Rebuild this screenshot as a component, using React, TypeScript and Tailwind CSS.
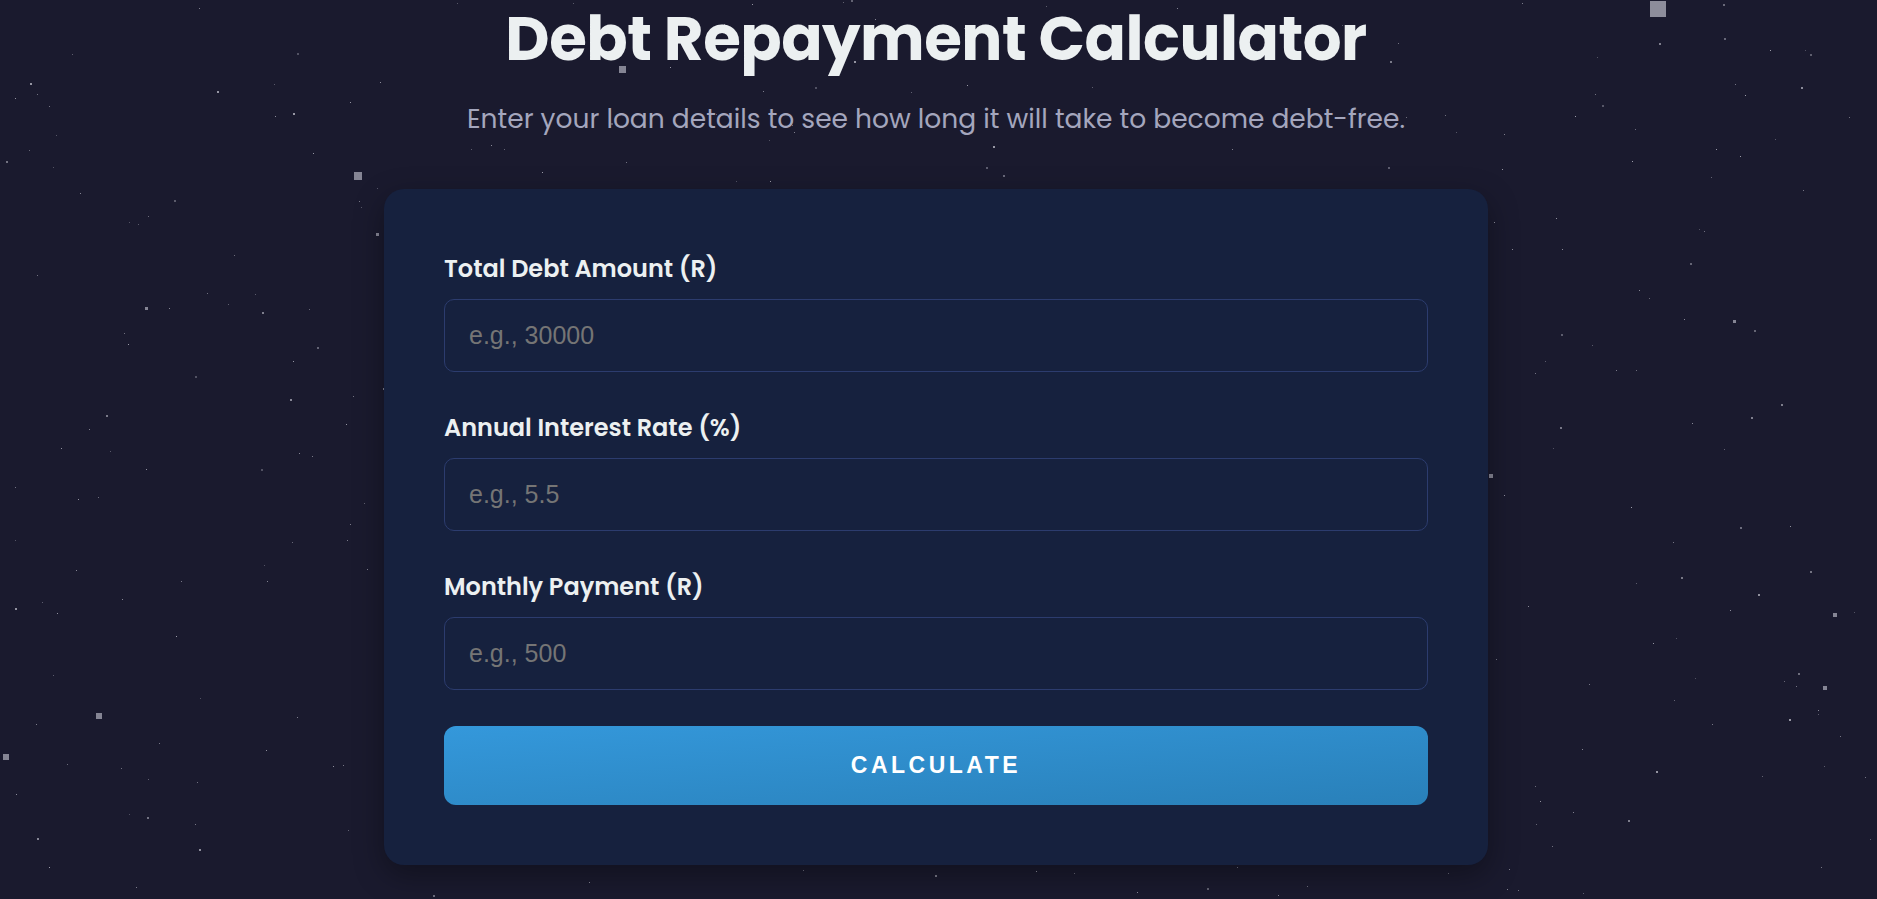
import React from "react";

// seeded random so the starfield is the same on every render
function makeRandom(seed: number) {
  let s = seed;
  return () => {
    s = (s * 16807) % 2147483647;
    return (s - 1) / 2147483646;
  };
}

interface Star {
  x: number;
  y: number;
  size: number;
  opacity: number;
}

const bigStars: Star[] = [
  { x: 1650, y: 1, size: 16, opacity: 0.75 },
  { x: 354, y: 172, size: 8, opacity: 0.7 },
  { x: 619, y: 66, size: 7, opacity: 0.7 },
  { x: 96, y: 713, size: 6, opacity: 0.7 },
  { x: 3, y: 754, size: 6, opacity: 0.7 },
  { x: 1833, y: 613, size: 4, opacity: 0.7 },
  { x: 1823, y: 686, size: 4, opacity: 0.7 },
  { x: 1489, y: 474, size: 4, opacity: 0.7 },
  { x: 376, y: 233, size: 3, opacity: 0.7 },
  { x: 145, y: 307, size: 3, opacity: 0.7 },
  { x: 1733, y: 320, size: 3, opacity: 0.7 },
];

const rand = makeRandom(20240611);
const smallStars: Star[] = Array.from({ length: 460 }, () => ({
  x: Math.floor(rand() * 1877),
  y: Math.floor(rand() * 899),
  size: rand() > 0.8 ? 2 : 1,
  opacity: 0.35 + rand() * 0.5,
}));

const fields = [
  { id: "debt", label: "Total Debt Amount (R)", placeholder: "e.g., 30000" },
  { id: "rate", label: "Annual Interest Rate (%)", placeholder: "e.g., 5.5" },
  { id: "payment", label: "Monthly Payment (R)", placeholder: "e.g., 500" },
];

const Starfield = () => (
  <div className="pointer-events-none absolute inset-0">
    {[...smallStars, ...bigStars].map((s, i) => (
      <span
        key={i}
        className="absolute bg-[#b4b4c0]"
        style={{ left: s.x, top: s.y, width: s.size, height: s.size, opacity: s.opacity }}
      />
    ))}
  </div>
);

export default function App() {
  return (
    <div className="relative min-h-screen overflow-hidden bg-[#1a1a2e] font-['Poppins','Inter',sans-serif] text-[#ecf0f1]">
      <Starfield />
      <div className="relative flex flex-col items-center pr-[5px]">
        <h1 className="text-[61px] leading-[78px] font-bold tracking-[-0.5px] text-[#ecf0f1]">
          Debt Repayment Calculator
        </h1>
        <p className="mt-[23px] text-[26.5px] leading-[36px] text-[#a4a6bd]">
          Enter your loan details to see how long it will take to become debt-free.
        </p>

        <div className="mt-[52px] w-[1104px] rounded-[20px] bg-[#16213e] p-[60px] shadow-[0_10px_30px_rgba(0,0,0,0.35)]">
          <div className="flex flex-col gap-[36px]">
            {fields.map((f) => (
              <div key={f.id} className="flex flex-col">
                <label htmlFor={f.id} className="mb-[10px] text-[24px] leading-[40px] font-semibold text-[#ecf0f1]">
                  {f.label}
                </label>
                <input
                  id={f.id}
                  type="number"
                  placeholder={f.placeholder}
                  className="h-[73px] rounded-[10px] border border-[#2c3c6e] bg-[#16213e] px-[24px] font-['Liberation_Sans',Arial,sans-serif] text-[25px] text-[#ecf0f1] placeholder:text-[#757575] outline-none"
                />
              </div>
            ))}
          </div>
          <button className="mt-[36px] h-[79px] w-full rounded-[12px] bg-linear-to-br from-[#3498db] to-[#2980b9] font-['Liberation_Sans',Arial,sans-serif] text-[23px] font-bold tracking-[3.5px] text-white">
            CALCULATE
          </button>
        </div>
      </div>
    </div>
  );
}
